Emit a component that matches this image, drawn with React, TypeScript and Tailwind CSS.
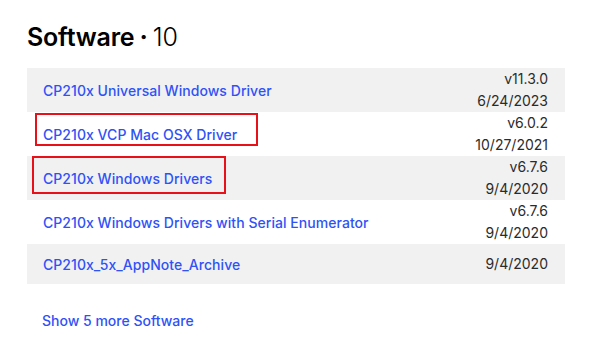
const software = [
  { name: "CP210x Universal Windows Driver", version: "v11.3.0", date: "6/24/2023" },
  { name: "CP210x VCP Mac OSX Driver", version: "v6.0.2", date: "10/27/2021", mark: "a" },
  { name: "CP210x Windows Drivers", version: "v6.7.6", date: "9/4/2020", mark: "b" },
  { name: "CP210x Windows Drivers with Serial Enumerator", version: "v6.7.6", date: "9/4/2020" },
  { name: "CP210x_5x_AppNote_Archive", date: "9/4/2020" },
];

export default function App() {
  return (
    <div
      className="w-[596px] h-[341px] bg-white px-[27px] pt-[22px]"
      style={{ fontFamily: "Inter, 'Noto Sans', sans-serif" }}
    >
      <h2 className="text-[25px] leading-[30px] text-black flex items-center">
        <span className="font-semibold tracking-[-0.2px]">Software</span>
        <span className="font-bold ml-[5px]">·</span>
        <span className="font-light ml-[5px]">10</span>
      </h2>

      <div className="mt-[16px] w-[538px]">
        {software.map((item, i) => (
          <div
            key={item.name}
            className={`flex items-center justify-between pl-[16px] pr-[17px] ${
              item.version ? "h-[44px]" : "h-[40px]"
            } ${i % 2 === 0 ? "bg-[#f1f1f1]" : "bg-white"}`}
          >
            <div className="relative">
              {item.mark === "a" && (
                <div className="absolute left-[-8px] top-[-9px] w-[223px] h-[33px] border-2 border-[#e8111a]" />
              )}
              {item.mark === "b" && (
                <div className="absolute left-[-11px] top-[-10px] w-[194px] h-[38px] border-2 border-[#e8111a]" />
              )}
              <a className="text-[14px] font-medium text-[#2f52f7] leading-[20px] tracking-[0.05px]">
                {item.name}
              </a>
            </div>
            <div className="text-right text-[14px] leading-[22px] text-[#2b2b2b]">
              {item.version && <div>{item.version}</div>}
              <div>{item.date}</div>
            </div>
          </div>
        ))}
      </div>

      <div className="mt-[24px] pl-[15px]">
        <a className="text-[14px] font-medium text-[#2f52f7]">Show 5 more Software</a>
      </div>
    </div>
  );
}
